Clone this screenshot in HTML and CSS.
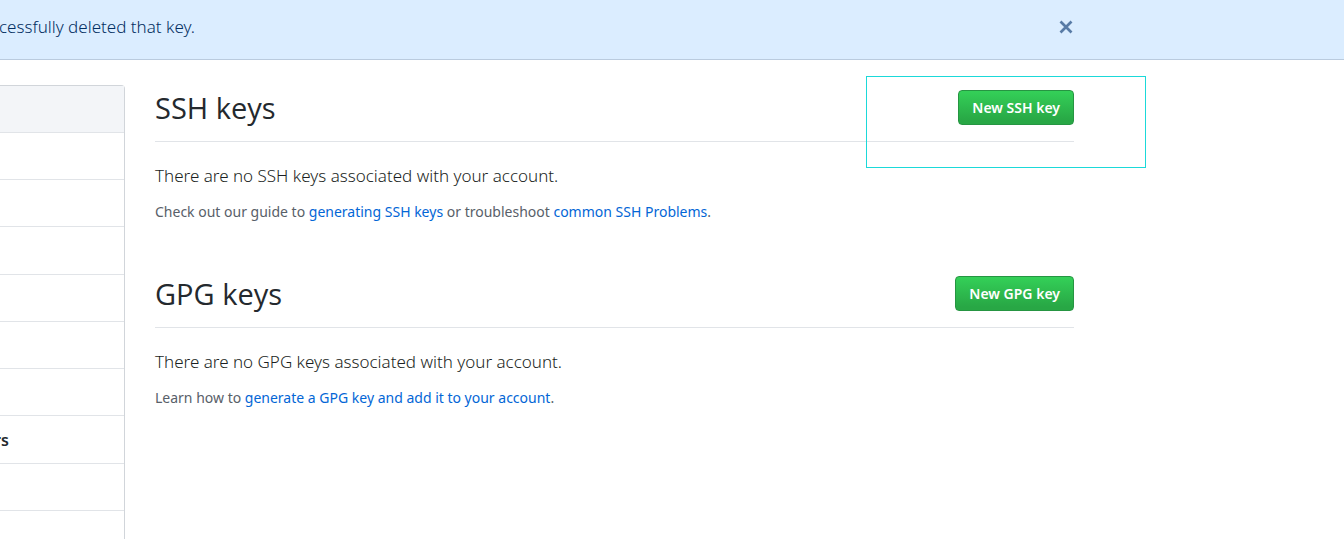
FILE: index.html
```html
<!DOCTYPE html>
<html lang="en">
<head>
<meta charset="utf-8">
<title>SSH and GPG keys</title>
<link rel="stylesheet" href="styles.css">
</head>
<body>
<div class="flash" role="status">
  <div class="flash-inner">
    <p class="flash-text">cessfully deleted that key.</p>
    <button class="flash-close" type="button" aria-label="Dismiss">
      <svg width="14" height="14" viewBox="0 0 14 14" aria-hidden="true"><path d="M1.5 1.5 12.5 12.5M12.5 1.5 1.5 12.5" fill="none" stroke="currentColor" stroke-width="2.7"/></svg>
    </button>
  </div>
</div>
<div class="layout">
  <nav class="menu">
    <div class="menu-item menu-heading"></div>
    <div class="menu-item"></div>
    <div class="menu-item"></div>
    <div class="menu-item"></div>
    <div class="menu-item"></div>
    <div class="menu-item"></div>
    <div class="menu-item"></div>
    <div class="menu-item menu-current">rs</div>
    <div class="menu-item"></div>
    <div class="menu-item"></div>
  </nav>
  <main class="content">
    <section class="keys">
      <header class="subhead">
        <h2 class="subhead-title">SSH keys</h2>
        <div class="subhead-action">
          <button class="btn" type="button">New SSH key</button>
          <span class="highlight"></span>
        </div>
      </header>
      <p class="lead">There are no SSH keys associated with your account.</p>
      <p class="help">Check out our guide to <a href="#ssh">generating SSH keys</a> or troubleshoot <a href="#problems">common SSH Problems</a>.</p>
    </section>
    <section class="keys">
      <header class="subhead">
        <h2 class="subhead-title">GPG keys</h2>
        <div class="subhead-action">
          <button class="btn" type="button">New GPG key</button>
        </div>
      </header>
      <p class="lead">There are no GPG keys associated with your account.</p>
      <p class="help">Learn how to <a href="#gpg">generate a GPG key and add it to your account</a>.</p>
    </section>
  </main>
</div>
</body>
</html>
```
FILE: styles.css
```css
* { box-sizing: border-box; }
html { overflow: hidden; }
body {
  margin: 0;
  height: 100vh;
  overflow: hidden;
  background: #fff;
  color: #24292e;
  font-family: "Noto Sans", "Open Sans", sans-serif;
  font-size: 17px;
  font-weight: 300;
  line-height: 24px;
}
h2, p { margin: 0; }
a { color: #0366d6; text-decoration: none; }

.flash {
  padding: 15px 0 20px;
  background: #dbedff;
  border-bottom: 1px solid #bacbde;
  color: #032f62;
}
.flash-inner {
  display: flex;
  align-items: center;
  justify-content: space-between;
  max-width: 1073px;
}
.flash-text { margin-left: -1px; }
.flash-close {
  display: flex;
  padding: 0;
  border: 0;
  background: none;
  color: #587ba6;
  cursor: pointer;
}

.layout {
  display: grid;
  grid-template-columns: 125px minmax(0, 1fr);
  gap: 30px;
  max-width: 1074px;
  padding-top: 25px;
}
.menu {
  border: 1px solid #d1d5da;
  border-left: 0;
  border-radius: 0 4px 4px 0;
}
.menu-item {
  height: 47px;
  padding: 12px 0;
  border-bottom: 1px solid #e1e4e8;
}
.menu-item:nth-child(4n) { height: 48px; }
.menu-heading { background: #f3f5f8; }
.menu-current { text-indent: -6px; font-size: 16px; font-weight: 600; }

.keys { padding-top: 5px; margin-bottom: 48px; }
.subhead {
  display: flex;
  align-items: flex-start;
  justify-content: space-between;
  padding-bottom: 15px;
  margin-bottom: 22px;
  border-bottom: 1px solid #e1e4e8;
}
.subhead-title {
  font-family: "Open Sans", "Noto Sans", sans-serif;
  font-size: 29px;
  font-weight: 400;
  line-height: 36px;
}
.subhead-action { position: relative; }
.btn {
  display: block;
  padding: 5px 13px;
  border: 1px solid #269542;
  border-radius: 4px;
  background: linear-gradient(#34d058, #28a745 90%);
  color: #fff;
  font: 600 14px/23px "Noto Sans", "Open Sans", sans-serif;
  white-space: nowrap;
  cursor: pointer;
}
.highlight {
  position: absolute;
  top: -14px;
  right: -72px;
  width: 280px;
  height: 92px;
  border: 1px solid #1bd9d9;
  pointer-events: none;
}
.lead { margin-bottom: 13px; color: #1b1f23; }
.help {
  color: #586069;
  font-size: 14px;
  font-weight: 400;
  line-height: 22px;
}
```
